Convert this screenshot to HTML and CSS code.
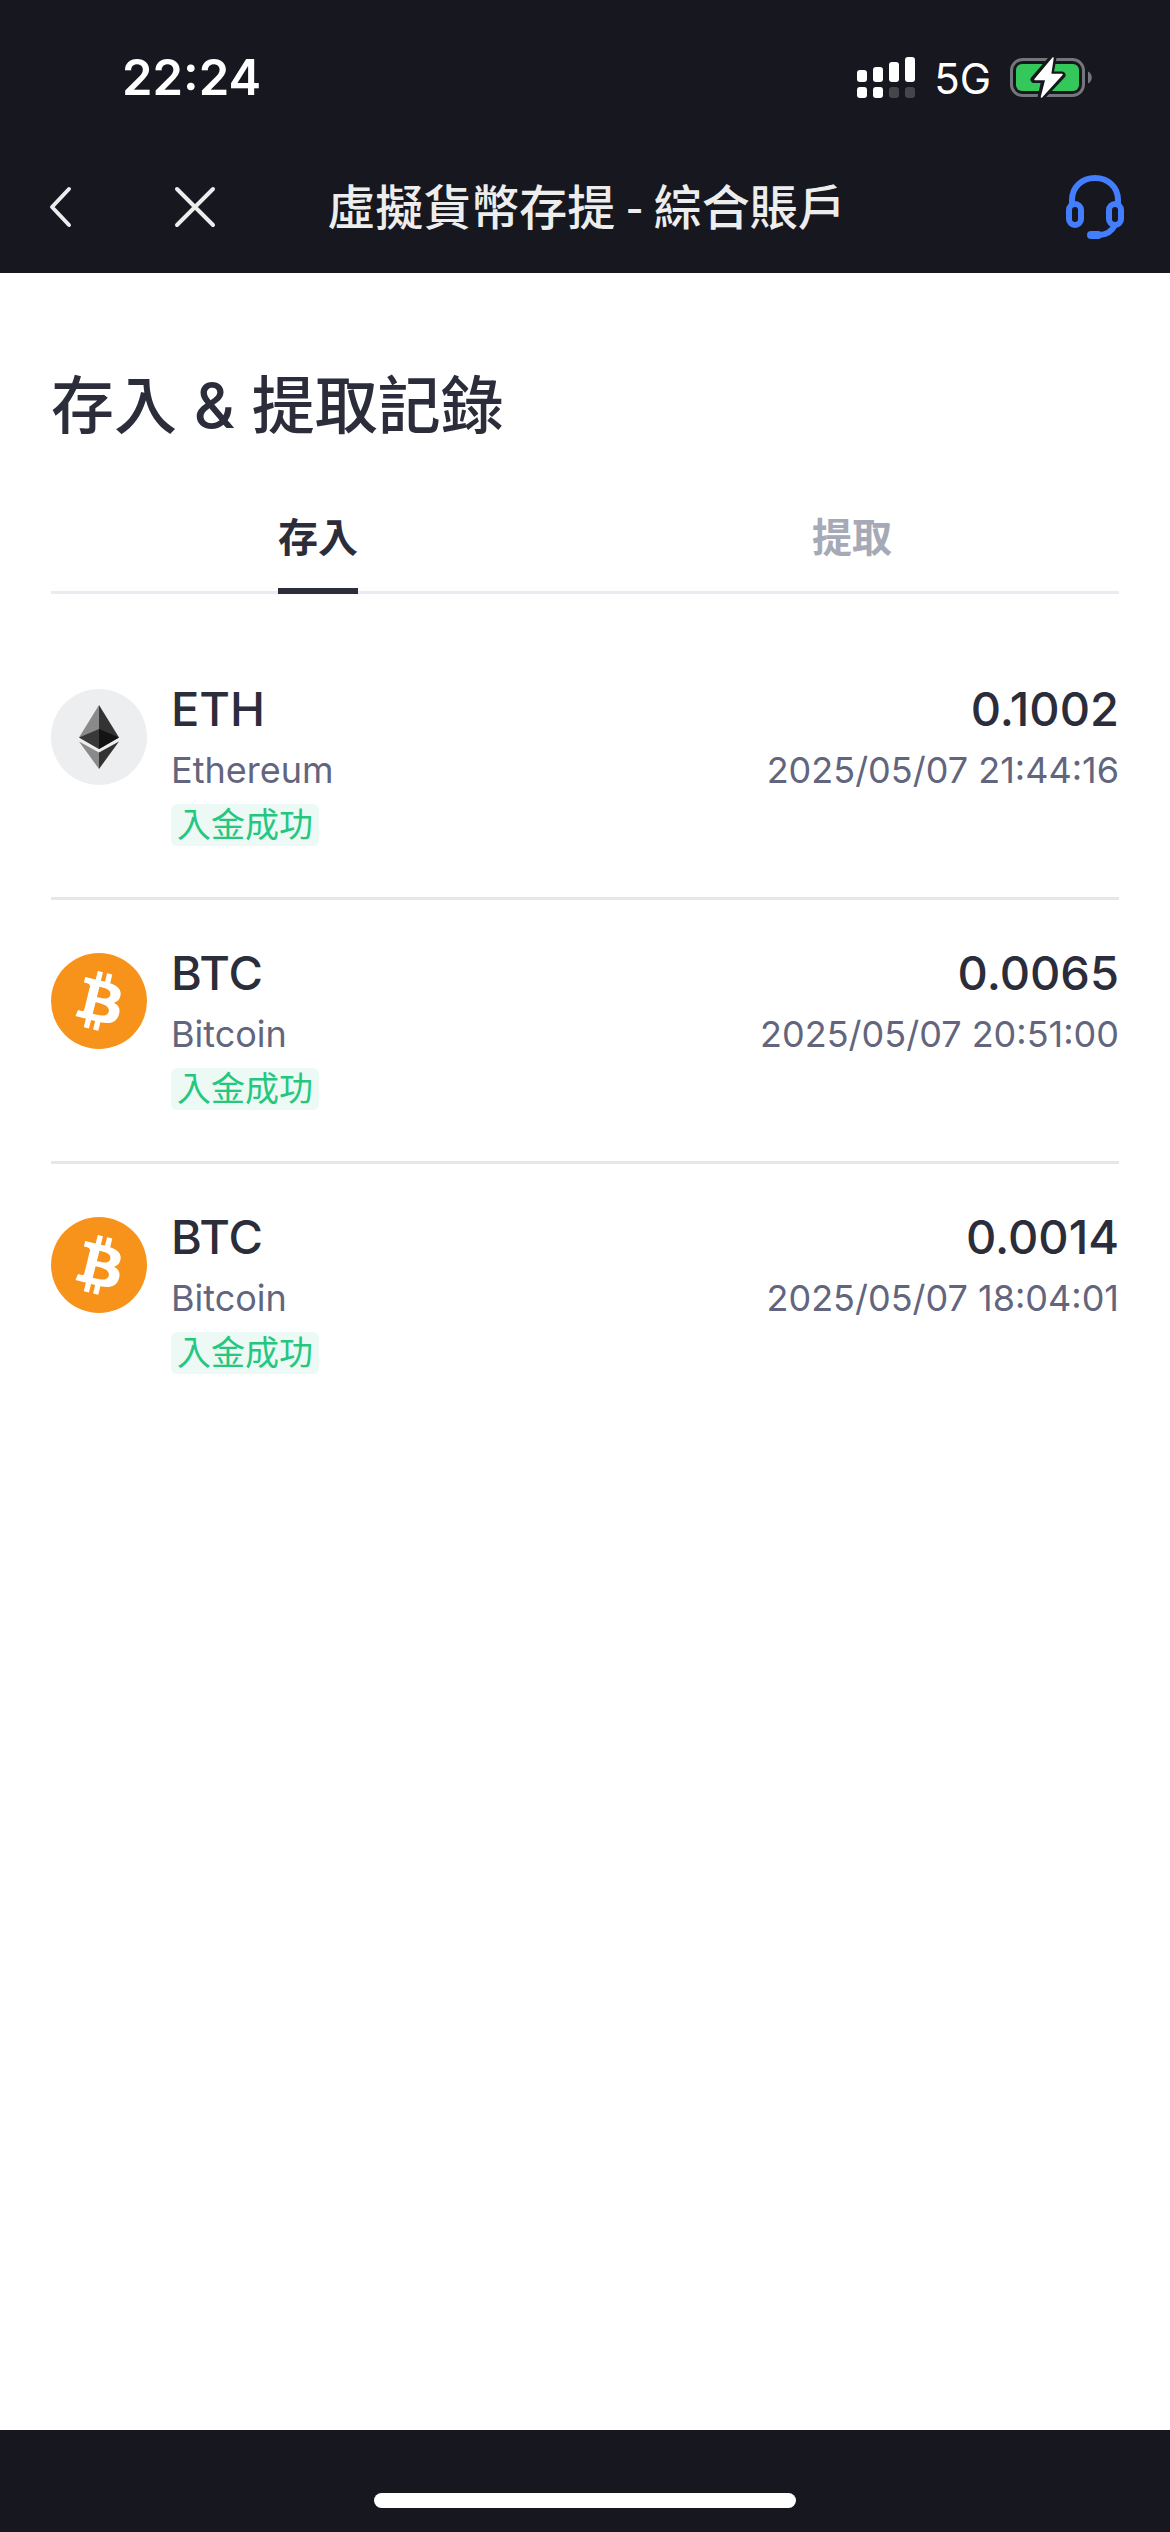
FILE: index.html
```html
<!DOCTYPE html>
<html lang="zh-Hant">
<head>
  <meta charset="UTF-8">
  <meta name="viewport" content="width=device-width, initial-scale=1.0">
  <title>虛擬貨幣存提 - 綜合賬戶</title>
  <link rel="stylesheet" href="styles.css">
</head>
<body>

  <!-- shared coin logos -->
  <svg class="sprite" aria-hidden="true">
    <symbol id="eth" viewBox="0 0 96 96">
      <circle cx="48" cy="48" r="48" fill="#edeef0"/>
      <path d="M48 16L28 48.500L48 60Z" fill="#8a8a8a"/>
      <path d="M48 16L68 48.500L48 60Z" fill="#333333"/>
      <path d="M48 40L28 48.500L48 60Z" fill="#393939"/>
      <path d="M48 40L68 48.500L48 60Z" fill="#141414"/>
      <path d="M28 52.500L48 63.500V80Z" fill="#8a8a8a"/>
      <path d="M68 52.500L48 63.500V80Z" fill="#333333"/>
    </symbol>
    <symbol id="btc" viewBox="0 0 32 32">
      <circle cx="16" cy="16" r="16" fill="#f7931a"/>
      <path fill="#fff" d="M23.189 14.02c.314-2.096-1.283-3.223-3.465-3.975l.708-2.84-1.728-.43-.69 2.765c-.454-.114-.92-.22-1.385-.326l.695-2.783L15.596 6l-.708 2.839c-.376-.086-.746-.17-1.104-.26l.002-.009-2.384-.595-.46 1.846s1.283.294 1.256.312c.7.175.826.638.805 1.006l-.806 3.235c.048.012.11.03.18.057l-.183-.045-1.13 4.532c-.086.212-.303.531-.793.41.018.025-1.256-.313-1.256-.313l-.858 1.978 2.25.561c.418.105.828.215 1.231.318l-.715 2.872 1.727.43.708-2.84c.472.127.93.245 1.378.357l-.706 2.828 1.728.43.715-2.866c2.948.558 5.164.333 6.097-2.333.752-2.146-.037-3.385-1.588-4.192 1.13-.26 1.98-1.003 2.207-2.538zm-3.95 5.538c-.533 2.147-4.148.986-5.32.695l.95-3.805c1.172.293 4.929.872 4.37 3.11zm.535-5.569c-.487 1.953-3.495.96-4.47.717l.86-3.45c.975.243 4.118.696 3.61 2.733z"/>
    </symbol>
  </svg>

  <header class="header">
    <div class="status-bar">
      <span class="time">22:24</span>
      <div class="status-icons">
        <svg class="signal" viewBox="0 0 58 41" aria-hidden="true">
          <g fill="#fff">
            <rect x="0" y="13" width="10" height="12" rx="3"/>
            <rect x="16" y="10" width="10" height="15" rx="3"/>
            <rect x="32" y="5" width="10" height="20" rx="3"/>
            <rect x="48" y="0" width="10" height="25" rx="3"/>
            <rect x="0" y="30" width="10" height="11" rx="3"/>
            <rect x="16" y="30" width="10" height="11" rx="3"/>
          </g>
          <g fill="#45464c">
            <rect x="32" y="30" width="10" height="11" rx="3"/>
            <rect x="48" y="30" width="10" height="11" rx="3"/>
          </g>
        </svg>
        <span class="network">5G</span>
        <svg class="battery" viewBox="0 0 82 41" aria-hidden="true">
          <rect x="1.500" y="2.500" width="72" height="36" rx="11" fill="none" stroke="#75767b" stroke-width="3"/>
          <path d="M78 14.500c5 2 5 10 0 12z" fill="#75767b"/>
          <rect x="6" y="7" width="63" height="27" rx="6" fill="#34c759"/>
          <path d="M43 0.500L24 22.500H35L31 40.500L52 18H40Z" fill="#16171f" stroke="#16171f" stroke-width="7" stroke-linejoin="round"/>
          <path d="M43 1L25 22.500H36L31.500 40L52 17.500H40.500Z" fill="#fff" stroke="#fff" stroke-width="1.500" stroke-linejoin="round"/>
        </svg>
      </div>
    </div>

    <nav class="nav">
      <div class="nav-left">
        <button class="icon-button" aria-label="返回">
          <svg class="icon-back" viewBox="0 0 24 42"><path d="M21 3L4 21L21 39"/></svg>
        </button>
        <button class="icon-button" aria-label="關閉">
          <svg class="icon-close" viewBox="0 0 42 42"><path d="M3 3L39 39M39 3L3 39"/></svg>
        </button>
      </div>
      <span class="nav-title">虛擬貨幣存提 - 綜合賬戶</span>
      <button class="icon-button support" aria-label="客服">
        <svg class="icon-support" viewBox="0 0 60 66">
          <path d="M7 30V26C7 13 17 4 30 4S53 13 53 26V30"/>
          <rect x="4" y="30" width="12" height="21" rx="6"/>
          <rect x="44" y="30" width="12" height="21" rx="6"/>
          <path d="M50 51C47 57 42 61 34 61"/>
          <path class="mic" d="M26 61H33"/>
        </svg>
      </button>
    </nav>
  </header>

  <main class="content">
    <h1 class="title">存入 &amp; 提取記錄</h1>

    <div class="tabs" role="tablist">
      <button class="tab active" role="tab" aria-selected="true"><span class="tab-label">存入</span></button>
      <button class="tab" role="tab" aria-selected="false"><span class="tab-label">提取</span></button>
    </div>

    <ul class="records">
      <li class="record">
        <svg class="coin" aria-hidden="true"><use href="#eth"/></svg>
        <div class="info">
          <span class="symbol">ETH</span>
          <span class="detail">Ethereum</span>
          <span class="tag">入金成功</span>
        </div>
        <div class="info right">
          <span class="symbol">0.1002</span>
          <time class="detail">2025/05/07 21:44:16</time>
        </div>
      </li>
      <li class="record">
        <svg class="coin" aria-hidden="true"><use href="#btc"/></svg>
        <div class="info">
          <span class="symbol">BTC</span>
          <span class="detail">Bitcoin</span>
          <span class="tag">入金成功</span>
        </div>
        <div class="info right">
          <span class="symbol">0.0065</span>
          <time class="detail">2025/05/07 20:51:00</time>
        </div>
      </li>
      <li class="record">
        <svg class="coin" aria-hidden="true"><use href="#btc"/></svg>
        <div class="info">
          <span class="symbol">BTC</span>
          <span class="detail">Bitcoin</span>
          <span class="tag">入金成功</span>
        </div>
        <div class="info right">
          <span class="symbol">0.0014</span>
          <time class="detail">2025/05/07 18:04:01</time>
        </div>
      </li>
    </ul>
  </main>

  <footer class="footer">
    <div class="home-bar"></div>
  </footer>

</body>
</html>
```

FILE: styles.css
```css
* {
  box-sizing: border-box;
}

body {
  margin: 0;
  min-height: 100vh;
  display: flex;
  flex-direction: column;
  font-family: Inter, "Noto Sans CJK TC", sans-serif;
  background: #fff;
  color: #2b2d3b;
}

button {
  padding: 0;
  border: none;
  background: none;
  font-family: inherit;
  cursor: pointer;
}

.sprite {
  display: none;
}

/* Header */
.header {
  background: #16171f;
  color: #fff;
}

.status-bar {
  display: flex;
  justify-content: space-between;
  align-items: center;
  height: 141px;
  padding: 14px 78px 0 122px;
}

.time {
  font-size: 49px;
  font-weight: 600;
}

.status-icons {
  display: flex;
  align-items: center;
  gap: 19px;
}

.signal {
  width: 58px;
  height: 41px;
}

.network {
  font-size: 42px;
  line-height: 44px;
  padding-top: 2px;
}

.battery {
  width: 82px;
  height: 41px;
}

.nav {
  display: grid;
  grid-template-columns: 1fr auto 1fr;
  align-items: center;
  height: 132px;
  padding: 0 45px 0 48px;
}

.nav-left {
  display: flex;
  gap: 102px;
}

.nav-title {
  padding-bottom: 6px;
  font-family: "Noto Sans CJK TC", sans-serif;
  font-size: 48px;
  font-weight: 500;
  line-height: 66px;
  color: #ededed;
}

.icon-button {
  display: flex;
}

.icon-back,
.icon-close,
.icon-support {
  fill: none;
  stroke: #ededed;
  stroke-width: 4;
  stroke-linecap: round;
  stroke-linejoin: round;
}

.icon-back {
  width: 24px;
  height: 42px;
}

.icon-close {
  width: 42px;
  height: 42px;
}

.support {
  justify-self: end;
}

.icon-support {
  width: 60px;
  height: 66px;
  stroke: #437eff;
  stroke-width: 6;
}

.mic {
  stroke-width: 8;
}

/* Content */
.content {
  flex: 1;
  padding: 87px 51px 0;
}

.title {
  margin: 0;
  font-size: 63px;
  font-weight: 500;
  line-height: 90px;
}

.tabs {
  display: flex;
  margin-top: 45px;
  border-bottom: 3px solid #eaeaf0;
}

.tab {
  flex: 1;
  display: flex;
  justify-content: center;
  color: #a6a9b6;
  font-size: 40px;
  font-weight: 700;
}

.tab-label {
  height: 99px;
  margin-bottom: -3px;
  line-height: 86px;
}

.tab.active {
  color: #2b2d3b;
}

.tab.active .tab-label {
  border-bottom: 6px solid #2b2d3b;
}

/* Records */
.records {
  list-style: none;
  margin: 42px 0 0;
  padding: 0;
}

.record {
  display: flex;
  align-items: flex-start;
  gap: 24px;
  padding: 40px 0 51px;
  border-bottom: 3px solid #e6e6eb;
}

.record:last-child {
  border-bottom: none;
}

.coin {
  width: 96px;
  height: 96px;
  margin-top: 13px;
}

.info {
  display: flex;
  flex-direction: column;
  align-items: flex-start;
}

.right {
  flex: 1;
  align-items: flex-end;
}

.symbol {
  font-size: 47px;
  font-weight: 500;
  line-height: 66px;
}

.detail {
  font-size: 36px;
  line-height: 56px;
  color: #62657d;
}

.tag {
  margin-top: 6px;
  padding: 0 6px;
  border-radius: 6px;
  background: #edf9f5;
  color: #25c77f;
  font-size: 34px;
  line-height: 42px;
}

/* Footer */
.footer {
  display: flex;
  justify-content: center;
  align-items: flex-end;
  height: 102px;
  padding-bottom: 24px;
  background: #16171f;
}

.home-bar {
  width: 36%;
  height: 15px;
  border-radius: 8px;
  background: #fff;
}
```
